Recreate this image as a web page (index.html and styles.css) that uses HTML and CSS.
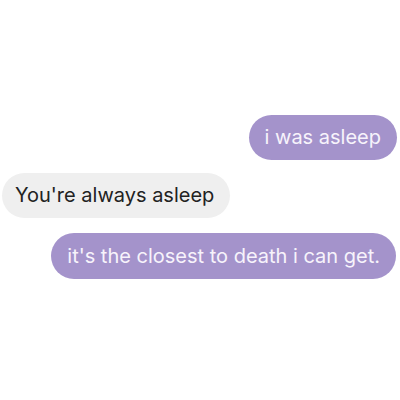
FILE: index.html
```html
<!DOCTYPE html>
<html>
<head>
<meta charset="utf-8">
<link rel="stylesheet" href="styles.css">
</head>
<body>
<div class="chat">
  <div class="msg me first">i was asleep</div>
  <div class="msg them">You're always asleep</div>
  <div class="msg me third">it's the closest to death i can get.</div>
</div>
</body>
</html>
```
FILE: styles.css
```css
html, body {
  margin: 0;
  padding: 0;
  background: #ffffff;
  width: 400px;
  height: 400px;
  overflow: hidden;
}
.chat {
  display: flex;
  flex-direction: column;
  padding-top: 115px;
  font-family: Inter, Roboto, sans-serif;
  font-size: 20px;
}
.msg {
  height: 45px;
  line-height: 45px;
  border-radius: 23px;
  padding: 0 16px;
  white-space: nowrap;
}
.me {
  align-self: flex-end;
  background: #a493cb;
  color: #f7f3fb;
}
.them {
  align-self: flex-start;
  background: #efefef;
  color: #222222;
  margin-left: 2px;
  margin-top: 13px;
  padding-left: 13px;
}
.first {
  margin-right: 3px;
}
.third {
  margin-top: 15px;
  margin-right: 4px;
  height: 46px;
  line-height: 46px;
}
```
